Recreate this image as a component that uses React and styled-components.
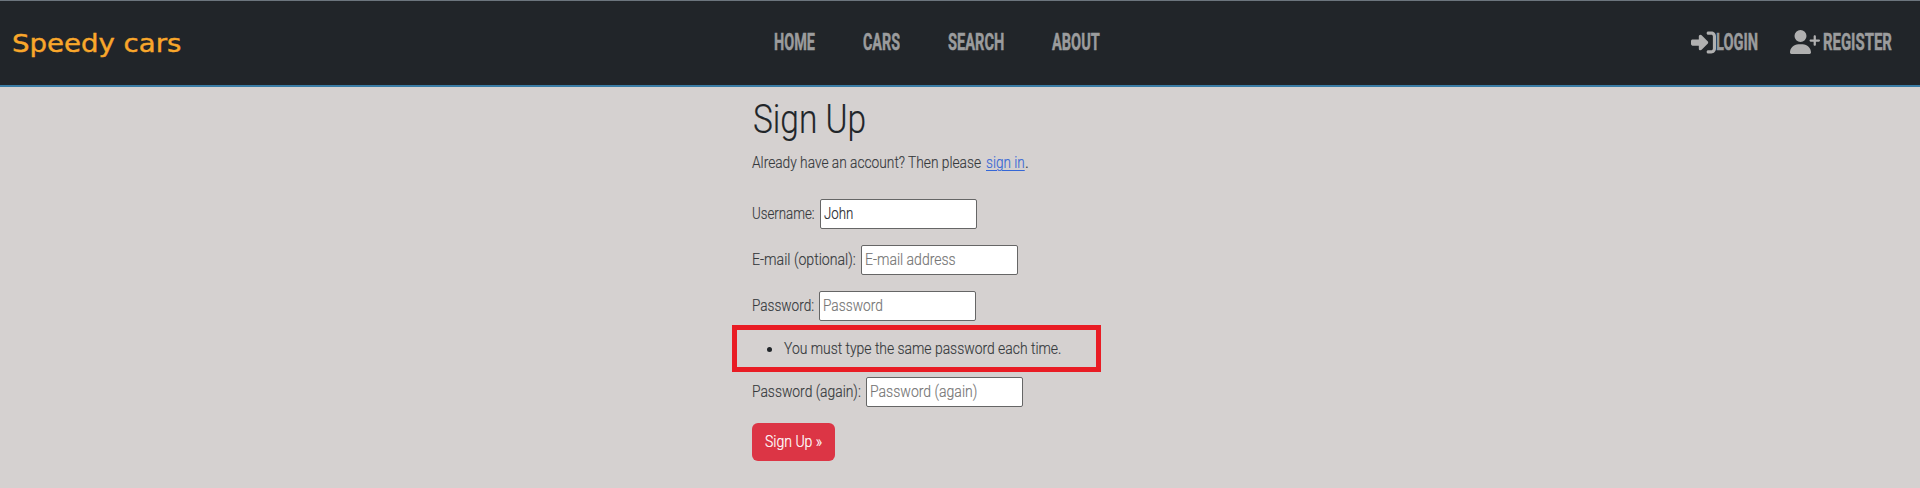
import React, { useLayoutEffect, useRef, useState } from "react";
import styled, { createGlobalStyle } from "styled-components";
import { FaRightToBracket, FaUserPlus } from "react-icons/fa6";

const GlobalStyle = createGlobalStyle`
  * { box-sizing: border-box; }
  body {
    margin: 0;
    background: #d5d1d0;
    color: #212529;
    font: 300 16px/24px "Roboto", "Liberation Sans", sans-serif;
  }
`;

const FitBox = styled.span`
  display: inline-block;
  width: ${(p) => p.$width}px;
  white-space: nowrap;
  vertical-align: top;
`;

const FitInner = styled.span`
  display: inline-block;
  transform-origin: 0 50%;
`;

/* Text condensed or widened to an exact measure. */
function Fit({ width, children }) {
  const ref = useRef(null);
  const [scale, setScale] = useState(1);
  useLayoutEffect(() => {
    setScale(width / ref.current.offsetWidth);
  }, [width, children]);
  return (
    <FitBox $width={width}>
      <FitInner ref={ref} style={{ transform: `scaleX(${scale})` }}>
        {children}
      </FitInner>
    </FitBox>
  );
}

const Navbar = styled.header`
  display: grid;
  grid-template-columns: 1fr auto 1fr;
  align-items: center;
  height: 87px;
  padding: 0 28px 0 12px;
  background: #212529;
  border-top: 1px solid #6c757d;
  border-bottom: 2px solid #3a7ca5;
`;

const Brand = styled.a`
  color: #f9a72b;
  font: 400 24px/30px "DejaVu Sans", sans-serif;
  -webkit-text-stroke: 0.4px #f9a72b;
  padding-top: 1px;
`;

const NavList = styled.nav`
  display: flex;
  gap: 48px;
  margin-right: 31px;
`;

const NavLink = styled.a`
  display: flex;
  align-items: center;
  gap: ${(p) => p.$gap || 0}px;
  color: #9b9c9d;
  font-size: 24px;
  font-weight: 700;
  line-height: 30px;
  margin-top: -2px;
  -webkit-text-stroke: 0.5px #9b9c9d;
  svg { display: block; color: #b0b0b0; }
`;

const Account = styled.nav`
  display: flex;
  justify-content: flex-end;
  gap: 32px;
`;

const Page = styled.main`
  width: 416px;
  margin-left: 752px;
  -webkit-text-stroke: 0.15px currentColor;
`;

const Title = styled.h1`
  margin: 0;
  padding: 9px 0 0 1px;
  font-size: 40px;
  font-weight: 300;
  line-height: 48px;
`;

const Intro = styled.p`
  display: flex;
  margin: 7px 0 24px;
  color: #35393c;
`;

const SignInLink = styled.a`
  margin-left: 5px;
  color: #3567d6;
  ${FitInner} {
    text-decoration: underline;
    text-decoration-thickness: 1px;
    text-underline-offset: 2px;
  }
`;

const Row = styled.div`
  display: flex;
  align-items: center;
  gap: 5px;
  height: 30px;
  margin-bottom: ${(p) => p.$after}px;
  color: #35393c;
`;

const Field = styled.div`
  width: 157px;
  height: 30px;
  padding: 2px 3px;
  background: #fff;
  border: 1px solid #666;
  border-radius: 2px;
  color: ${(p) => (p.$filled ? "#25282b" : "#757575")};
`;

const ErrorBox = styled.ul`
  width: 369px;
  height: 47px;
  margin: 0 0 5px -20px;
  padding: 7px 0 0 48px;
  border: 5px solid #e91c24;
  list-style: none;
`;

const ErrorItem = styled.li`
  display: flex;
  align-items: center;
  margin-left: -18px;
  color: #35393c;
  &::before {
    content: "";
    width: 5px;
    height: 5px;
    margin-right: 12px;
    border-radius: 50%;
    background: #212529;
  }
`;

const Submit = styled.button`
  display: block;
  width: 83px;
  height: 38px;
  padding: 0 13px;
  border: 0;
  border-radius: 6px;
  background: #dc3545;
  color: #fff;
  font: inherit;
  text-align: left;
  -webkit-text-stroke: 0.2px #fff;
`;

const links = [["HOME", 41], ["CARS", 37], ["SEARCH", 56], ["ABOUT", 48]];

function FormRow({ label, labelWidth, text, textWidth, filled, after }) {
  return (
    <Row $after={after}>
      <Fit width={labelWidth}>{label}</Fit>
      <Field $filled={filled}>
        <Fit width={textWidth}>{text}</Fit>
      </Field>
    </Row>
  );
}

export default function App() {
  return (
    <>
      <GlobalStyle />
      <Navbar>
        <Brand><Fit width={169}>Speedy cars</Fit></Brand>
        <NavList>
          {links.map(([name, width]) => (
            <NavLink key={name}><Fit width={width}>{name}</Fit></NavLink>
          ))}
        </NavList>
        <Account>
          <NavLink><FaRightToBracket size={25} /><Fit width={42}>LOGIN</Fit></NavLink>
          <NavLink $gap={3}>
            <FaUserPlus style={{ width: 30, height: 24 }} />
            <Fit width={69}>REGISTER</Fit>
          </NavLink>
        </Account>
      </Navbar>
      <Page>
        <Title><Fit width={113}>Sign Up</Fit></Title>
        <Intro>
          <Fit width={229}>Already have an account? Then please</Fit>
          <SignInLink><Fit width={39}>sign in</Fit></SignInLink>.
        </Intro>
        <FormRow label="Username:" labelWidth={63} text="John" textWidth={29} filled after={16} />
        <FormRow label="E-mail (optional):" labelWidth={104} text="E-mail address" textWidth={91} after={16} />
        <FormRow label="Password:" labelWidth={62} text="Password" textWidth={60} after={4} />
        <ErrorBox>
          <ErrorItem><Fit width={277}>You must type the same password each time.</Fit></ErrorItem>
        </ErrorBox>
        <FormRow label="Password (again):" labelWidth={109} text="Password (again)" textWidth={107} after={16} />
        <Submit><Fit width={57}>Sign Up »</Fit></Submit>
      </Page>
    </>
  );
}
